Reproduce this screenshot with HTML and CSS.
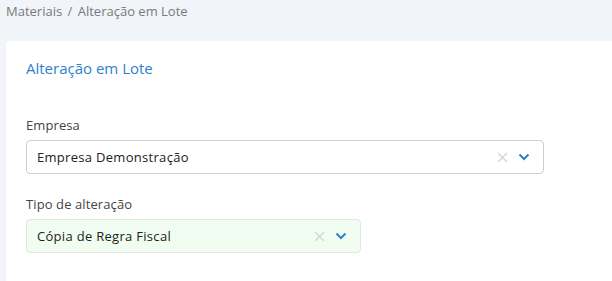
FILE: index.html
```html
<!DOCTYPE html>
<html lang="pt-BR">
<head>
  <meta charset="UTF-8" />
  <meta name="viewport" content="width=device-width, initial-scale=1.0" />
  <title>Alteração em Lote</title>
  <link rel="stylesheet" href="styles.css">
</head>
<body>

  <div class="breadcrumb">
    <span>Materiais</span>
    <span class="sep">/</span>
    <span>Alteração em Lote</span>
  </div>

  <div class="card">
    <h2 class="card-title">Alteração em Lote</h2>

    <div class="field">
      <label>Empresa</label>
      <div class="select select-wide">
        <span class="value">Empresa Demonstração</span>
        <svg class="clear" width="11" height="11" viewBox="0 0 11 11">
          <path d="M1 1 L10 10 M10 1 L1 10" fill="none" stroke="#d4d4d4" stroke-width="1.4"/>
        </svg>
        <svg class="chevron" width="12" height="8" viewBox="0 0 12 8">
          <path d="M1.5 1.5 L6 6 L10.5 1.5" fill="none" stroke="#2f80d0" stroke-width="2"/>
        </svg>
      </div>
    </div>

    <div class="field">
      <label>Tipo de alteração</label>
      <div class="select select-narrow filled">
        <span class="value">Cópia de Regra Fiscal</span>
        <svg class="clear" width="11" height="11" viewBox="0 0 11 11">
          <path d="M1 1 L10 10 M10 1 L1 10" fill="none" stroke="#d4d4d4" stroke-width="1.4"/>
        </svg>
        <svg class="chevron" width="12" height="8" viewBox="0 0 12 8">
          <path d="M1.5 1.5 L6 6 L10.5 1.5" fill="none" stroke="#2f80d0" stroke-width="2"/>
        </svg>
      </div>
    </div>
  </div>

</body>
</html>
```

FILE: styles.css
```css
body {
  margin: 0;
  background-color: #f1f4f9;
  font-family: "Open Sans", Arial, sans-serif;
  color: #444;
}
.breadcrumb {
  height: 41px;
  padding: 2px 0 0 6px;
  box-sizing: border-box;
  font-size: 13px;
  color: #7a7a7a;
}
.breadcrumb .sep {
  margin: 0 2px;
}
.card {
  background-color: #fff;
  margin-left: 6px;
  border-top-left-radius: 4px;
  padding: 17px 20px 7px 20px;
}
.card-title {
  margin: 0 0 38px 0;
  font-size: 15px;
  font-weight: normal;
  color: #2f80d0;
}
.field {
  margin-bottom: 21px;
}
.field label {
  display: block;
  font-size: 13px;
  letter-spacing: 0.1px;
  color: #444;
  margin-bottom: 6px;
}
.select {
  display: flex;
  align-items: center;
  height: 34px;
  box-sizing: border-box;
  border: 1px solid #cfcfcf;
  border-radius: 4px;
  padding: 0 13px 0 10px;
  font-size: 13px;
  letter-spacing: 0.3px;
  color: #222;
}
.select-wide {
  width: 518px;
}
.select-narrow {
  width: 335px;
}
.select.filled {
  background-color: #f0fdf0;
  border-color: #e0e6e0;
}
.select .value {
  flex: 1;
}
.select .clear {
  margin-right: 10px;
}
```
